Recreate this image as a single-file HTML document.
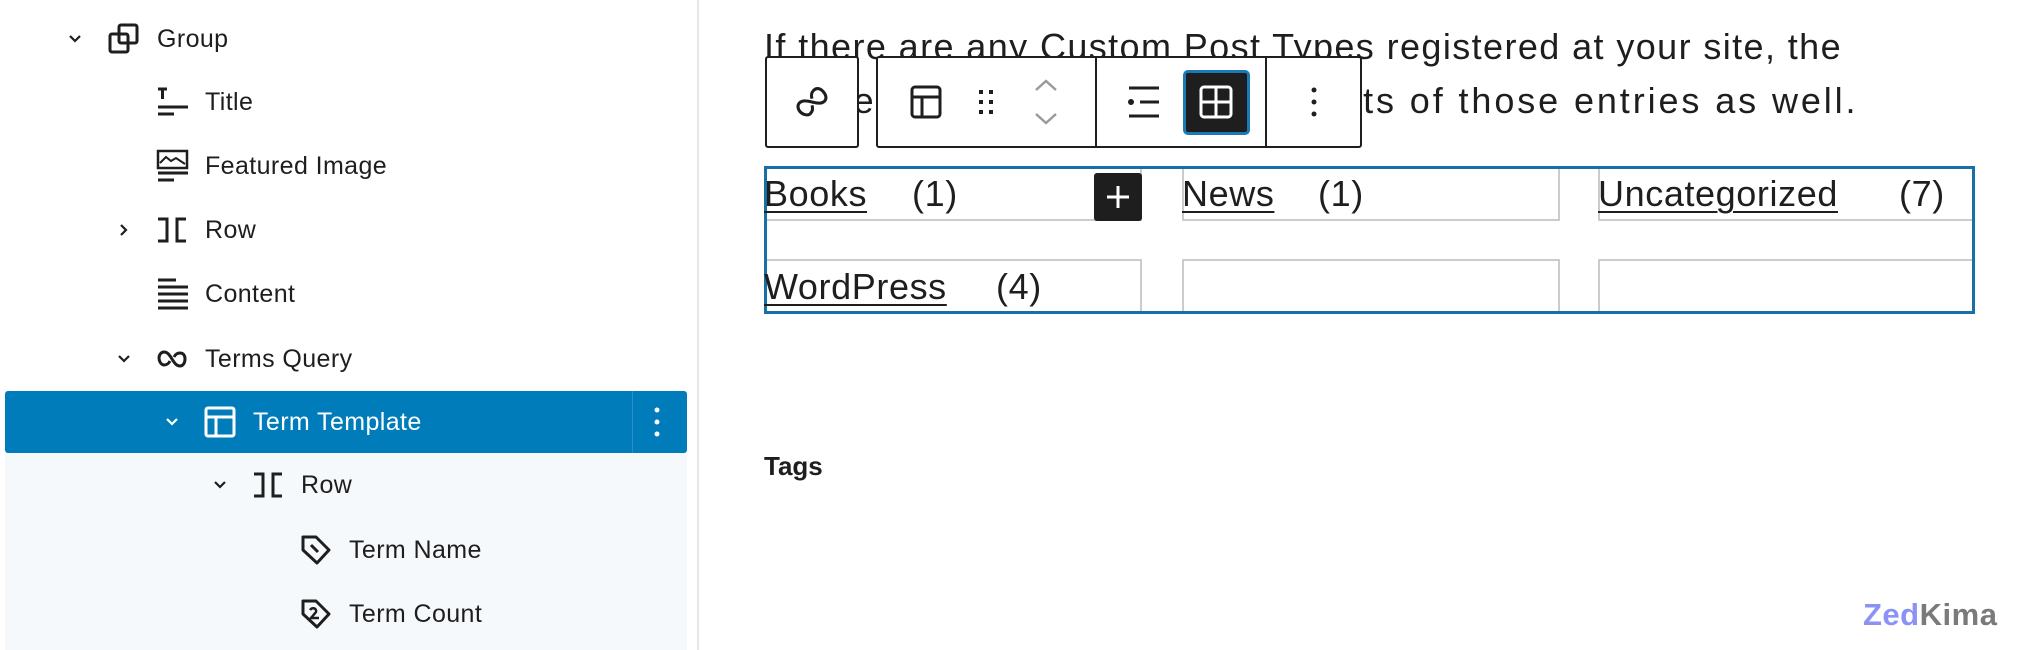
<!DOCTYPE html>
<html><head><meta charset="utf-8"><style>
*{margin:0;padding:0;box-sizing:border-box}
body{width:2030px;height:650px;background:#fff;position:relative;overflow:hidden;font-family:"Liberation Sans",sans-serif;color:#1e1e1e}
.a{position:absolute}
.t{position:absolute;font-size:25px;letter-spacing:0.4px;line-height:30px;transform:translateY(-50%);white-space:nowrap}
svg.i{position:absolute;transform:translate(-50%,-50%)}
.cell{position:absolute;border:2px solid #ccc}
.big{position:absolute;font-size:36px;letter-spacing:0.6px;line-height:40px;transform:translateY(-50%);white-space:nowrap;color:#1e1e1e}
u{text-decoration-thickness:2px;text-underline-offset:5px}
</style></head><body>
<div class="a" style="left:697px;top:0;width:2px;height:650px;background:#e6e6e6"></div>
<div class="a" style="left:5px;top:453px;width:682px;height:197px;background:#f6f9fb"></div>
<div class="a" style="left:5px;top:391px;width:682px;height:62px;background:#007cba;border-radius:3px"></div>
<div class="a" style="left:632px;top:391px;width:1px;height:62px;background:#2b8fc6"></div>

<svg class="i" style="left:75px;top:39px" width="20" height="20" viewBox="0 0 20 20"><path d="M5 7l5 5 5-5" fill="none" stroke="#1e1e1e" stroke-width="2.2"/></svg>
<svg class="i" style="left:124px;top:230px" width="20" height="20" viewBox="0 0 20 20"><path d="M7 5l5 5-5 5" fill="none" stroke="#1e1e1e" stroke-width="2.2"/></svg>
<svg class="i" style="left:124px;top:359px" width="20" height="20" viewBox="0 0 20 20"><path d="M5 7l5 5 5-5" fill="none" stroke="#1e1e1e" stroke-width="2.2"/></svg>
<svg class="i" style="left:172px;top:422px" width="20" height="20" viewBox="0 0 20 20"><path d="M5 7l5 5 5-5" fill="none" stroke="#fff" stroke-width="2.2"/></svg>
<svg class="i" style="left:220px;top:485px" width="20" height="20" viewBox="0 0 20 20"><path d="M5 7l5 5 5-5" fill="none" stroke="#1e1e1e" stroke-width="2.2"/></svg>

<svg class="i" style="left:124px;top:39px" width="34" height="34" viewBox="0 0 34 34"><rect x="3" y="12" width="18" height="18" rx="2" fill="none" stroke="#1e1e1e" stroke-width="3"/><rect x="12" y="3" width="18" height="18" rx="2" fill="none" stroke="#1e1e1e" stroke-width="3"/></svg>
<svg class="i" style="left:172px;top:102px" width="34" height="34" viewBox="0 0 34 34"><path d="M3 4h9M7.5 4v10M3 22h30M3 29h16" stroke="#1e1e1e" stroke-width="3" fill="none"/></svg>
<svg class="i" style="left:172px;top:166px" width="34" height="34" viewBox="0 0 34 34"><rect x="3" y="2" width="29" height="17" fill="none" stroke="#1e1e1e" stroke-width="2.5"/><path d="M5 14l6-6 5 4 5-3 9 6" fill="none" stroke="#1e1e1e" stroke-width="2"/><path d="M3 24h30M3 31h16" stroke="#1e1e1e" stroke-width="3"/></svg>
<svg class="i" style="left:172px;top:230px" width="34" height="34" viewBox="0 0 34 34"><path d="M3 6h9v22H3M31 6h-9v22h9" fill="none" stroke="#1e1e1e" stroke-width="3"/></svg>
<svg class="i" style="left:172px;top:294px" width="34" height="34" viewBox="0 0 34 34"><path d="M3 5h18M3 12h30M3 19h30M3 26h30M3 33h30" stroke="#1e1e1e" stroke-width="3" transform="translate(0,-2)"/></svg>
<svg class="i" style="left:172px;top:359px" width="34" height="34" viewBox="0 0 34 34"><path d="M17 17c-3-5-5-7-8-7s-5 3-5 6 2 7 5 7 5-2 6-4M17 17c3 5 5 7 8 7s5-3 5-7-2-6-5-6-5 2-6 4" fill="none" stroke="#1e1e1e" stroke-width="3"/></svg>
<svg class="i" style="left:220px;top:422px" width="34" height="34" viewBox="0 0 34 34"><rect x="3" y="3" width="28" height="28" rx="2" fill="none" stroke="#fff" stroke-width="3"/><path d="M3 12h28M13 12v19" stroke="#fff" stroke-width="3"/></svg>
<svg class="i" style="left:268px;top:485px" width="34" height="34" viewBox="0 0 34 34"><path d="M3 6h9v22H3M31 6h-9v22h9" fill="none" stroke="#1e1e1e" stroke-width="3"/></svg>
<svg class="i" style="left:316px;top:550px" width="34" height="34" viewBox="0 0 34 34"><path d="M4 4h13l13 13-12 13L4 17z" fill="none" stroke="#1e1e1e" stroke-width="3" stroke-linejoin="round"/><path d="M12 12l7 7" stroke="#1e1e1e" stroke-width="3"/></svg>
<svg class="i" style="left:316px;top:614px" width="34" height="34" viewBox="0 0 34 34"><path d="M4 4h13l13 13-12 13L4 17z" fill="none" stroke="#1e1e1e" stroke-width="3" stroke-linejoin="round"/><path d="M11 13c2-3 7-2 6 2l-5 6h8" fill="none" stroke="#1e1e1e" stroke-width="2.5"/></svg>

<div class="t" style="left:157px;top:39px">Group</div>
<div class="t" style="left:205px;top:102px">Title</div>
<div class="t" style="left:205px;top:166px">Featured Image</div>
<div class="t" style="left:205px;top:230px">Row</div>
<div class="t" style="left:205px;top:294px">Content</div>
<div class="t" style="left:205px;top:359px">Terms Query</div>
<div class="t" style="left:253px;top:422px;color:#fff">Term Template</div>
<div class="t" style="left:301px;top:485px">Row</div>
<div class="t" style="left:349px;top:550px">Term Name</div>
<div class="t" style="left:349px;top:614px">Term Count</div>
<svg class="i" style="left:657px;top:422px" width="10" height="34" viewBox="0 0 10 34"><circle cx="5" cy="5" r="2.5" fill="#fff"/><circle cx="5" cy="17" r="2.5" fill="#fff"/><circle cx="5" cy="29" r="2.5" fill="#fff"/></svg>

<div class="big" style="left:764px;top:47px;font-size:36px;letter-spacing:1.4px">If there are any Custom Post Types registered at your site, the</div>
<div class="big" style="left:764px;top:101px;font-size:36px;letter-spacing:2.9px">elements will display the contents of those entries as well.</div>

<div class="a" style="left:765px;top:56px;width:94px;height:92px;border:2px solid #1e1e1e;border-radius:3px;background:#fff"></div>
<svg class="i" style="left:812px;top:102px" width="40" height="40" viewBox="0 0 34 34"><path d="M17 17c-3-5-5-7-8-7s-5 3-5 6 2 7 5 7 5-2 6-4M17 17c3 5 5 7 8 7s5-3 5-7-2-6-5-6-5 2-6 4" fill="none" stroke="#1e1e1e" stroke-width="2.6" transform="rotate(-45 17 17)"/></svg>
<div class="a" style="left:876px;top:56px;width:486px;height:92px;border:2px solid #1e1e1e;border-radius:3px;background:#fff"></div>
<div class="a" style="left:1095px;top:56px;width:2px;height:92px;background:#1e1e1e"></div>
<div class="a" style="left:1265px;top:56px;width:2px;height:92px;background:#1e1e1e"></div>
<svg class="i" style="left:926px;top:102px" width="34" height="36" viewBox="0 0 34 36"><rect x="3" y="3" width="28" height="30" rx="3" fill="none" stroke="#1e1e1e" stroke-width="3"/><path d="M3 13h28M13 13v20" stroke="#1e1e1e" stroke-width="3"/></svg>
<svg class="i" style="left:986px;top:102px" width="20" height="34" viewBox="0 0 20 34"><g fill="#1e1e1e"><rect x="3" y="5" width="4" height="4"/><rect x="13" y="5" width="4" height="4"/><rect x="3" y="15" width="4" height="4"/><rect x="13" y="15" width="4" height="4"/><rect x="3" y="25" width="4" height="4"/><rect x="13" y="25" width="4" height="4"/></g></svg>
<svg class="i" style="left:1046px;top:102px" width="30" height="50" viewBox="0 0 30 50"><path d="M5 13l10-9 10 9M5 37l10 9 10-9" fill="none" stroke="#9a9a9a" stroke-width="2.5"/></svg>
<svg class="i" style="left:1143px;top:102px" width="36" height="36" viewBox="0 0 36 36"><path d="M4 4h30M15 18h19M4 32h30" stroke="#1e1e1e" stroke-width="3"/><circle cx="6" cy="18" r="3" fill="#1e1e1e"/></svg>
<div class="a" style="left:1183px;top:70px;width:67px;height:65px;background:#1e1e1e;border:3px solid #1a7ab8;border-radius:5px"></div>
<svg class="i" style="left:1216px;top:102px" width="36" height="36" viewBox="0 0 36 36"><rect x="3" y="3" width="30" height="30" rx="3" fill="none" stroke="#fff" stroke-width="3"/><path d="M18 3v30M3 18h30" stroke="#fff" stroke-width="3"/></svg>
<svg class="i" style="left:1314px;top:102px" width="10" height="34" viewBox="0 0 10 34"><circle cx="5" cy="5" r="2.5" fill="#1e1e1e"/><circle cx="5" cy="17" r="2.5" fill="#1e1e1e"/><circle cx="5" cy="29" r="2.5" fill="#1e1e1e"/></svg>

<div class="cell" style="left:764px;top:167px;width:378px;height:54px"></div>
<div class="cell" style="left:1182px;top:167px;width:378px;height:54px"></div>
<div class="cell" style="left:1598px;top:167px;width:376px;height:54px"></div>
<div class="cell" style="left:764px;top:259px;width:378px;height:54px"></div>
<div class="cell" style="left:1182px;top:259px;width:378px;height:54px"></div>
<div class="cell" style="left:1598px;top:259px;width:376px;height:54px"></div>
<div class="a" style="left:764px;top:166px;width:1211px;height:148px;border:3px solid #1a6fa5"></div>
<div class="big" style="left:764px;top:194px"><u>Books</u></div>
<div class="big" style="left:912px;top:194px">(1)</div>
<div class="big" style="left:1182px;top:194px"><u>News</u></div>
<div class="big" style="left:1318px;top:194px">(1)</div>
<div class="big" style="left:1598px;top:194px"><u>Uncategorized</u></div>
<div class="big" style="left:1899px;top:194px">(7)</div>
<div class="big" style="left:764px;top:287px"><u>WordPress</u></div>
<div class="big" style="left:996px;top:287px">(4)</div>
<div class="a" style="left:1094px;top:173px;width:48px;height:48px;background:#1e1e1e;border-radius:3px"></div>
<svg class="i" style="left:1118px;top:197px" width="28" height="28" viewBox="0 0 28 28"><path d="M14 3v22M3 14h22" stroke="#fff" stroke-width="3"/></svg>

<div class="a" style="left:764px;top:451px;font-size:26px;font-weight:bold;line-height:30px">Tags</div>
<div class="a" style="left:1863px;top:596px;font-size:31px;font-weight:bold;line-height:38px;letter-spacing:0.5px"><span style="color:#8a93f5">Zed</span><span style="color:#7a7a7a">Kima</span></div>
</body></html>
